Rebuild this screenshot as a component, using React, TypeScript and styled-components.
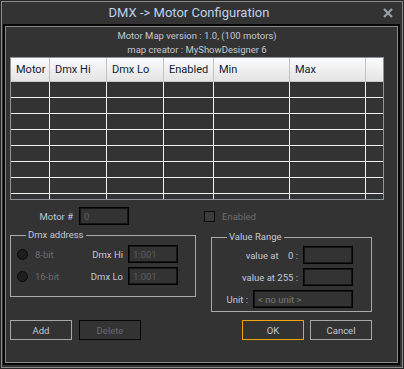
import React from "react";
import styled, { createGlobalStyle } from "styled-components";

const GlobalStyle = createGlobalStyle`
  html, body {
    margin: 0;
    padding: 0;
    background: #333333;
  }
  body {
    font-family: Roboto, "Liberation Sans", Arial, sans-serif;
  }
`;

const Window = styled.div`
  width: 404px;
  height: 369px;
  box-sizing: border-box;
  background: #333333;
  box-shadow: inset 0 0 0 1px #262626, inset 0 0 0 2px #8c8c8c;
  display: flex;
  flex-direction: column;
  padding: 0 4px 4px 3px;
`;

const TitleBar = styled.div`
  height: 24px;
  flex: none;
  display: flex;
  align-items: center;
`;

const Title = styled.div`
  flex: 1;
  text-align: center;
  color: #bdd1ee;
  font-size: 13px;
  padding: 1px 8px 0 0;
`;

const Close = styled.div`
  width: 10px;
  height: 10px;
  margin: 1px 7px 0 0;
  display: flex;
`;

const Panel = styled.div`
  flex: 1;
  border: 2px solid #060606;
  box-shadow: inset 1px 1px 0 #8a8a8a, inset -1px -1px 0 #8a8a8a;
  display: flex;
  flex-direction: column;
  padding: 3px 0 0 5px;
`;

const Info = styled.div`
  text-align: center;
  color: #c3c8d3;
  font-size: 9.5px;
  line-height: 14px;
  padding-right: 14px;
`;

const Table = styled.div`
  width: 374px;
  height: 143px;
  box-sizing: border-box;
  border: 1px solid #8e929c;
  overflow: hidden;
  display: grid;
  grid-template-columns: 39px 57px 57px 50px 76px 76px 1fr;
  grid-auto-rows: 16px;
  grid-template-rows: 24px;
`;

const HeadCell = styled.div<{ $last?: boolean }>`
  box-sizing: border-box;
  background: linear-gradient(#fbfbfb, #e4e4e4);
  border-right: ${(p) => (p.$last ? "none" : "1px solid #c2c2c2")};
  border-bottom: 1px solid #c8c8c8;
  color: #111a36;
  font-size: 11px;
  line-height: 23px;
  padding-left: 5px;
  white-space: nowrap;
`;

const Cell = styled.div<{ $last?: boolean }>`
  box-sizing: border-box;
  border-right: ${(p) => (p.$last ? "none" : "1px solid #f2f2f2")};
  border-bottom: 1px solid #f2f2f2;
`;

const Bottom = styled.div`
  width: 362px;
  margin-top: 7px;
  display: grid;
  grid-template-columns: 186px 168px;
  column-gap: 8px;
  align-items: start;
`;

const Column = styled.div`
  display: flex;
  flex-direction: column;
`;

const FieldRow = styled.div<{ $end?: boolean }>`
  height: 18px;
  display: flex;
  align-items: center;
  justify-content: ${(p) => (p.$end ? "flex-end" : "flex-start")};
  gap: 5px;
`;

const Label = styled.span<{ $width?: number; $dim?: boolean }>`
  font-size: 9.5px;
  color: ${(p) => (p.$dim ? "#6c6c6c" : "#c0c7d5")};
  white-space: pre;
  text-align: right;
  ${(p) => (p.$width ? `width: ${p.$width}px;` : "")}
`;

const Field = styled.input<{ $width?: number }>`
  width: ${(p) => p.$width ?? 50}px;
  height: 18px;
  box-sizing: border-box;
  background: #333333;
  border: 1px solid #000;
  box-shadow: inset 0 0 0 1px #151515;
  outline: none;
  padding: 0 0 0 4px;
  margin: 0;
  font-family: Roboto, "Liberation Sans", Arial, sans-serif;
  font-size: 9.5px;
  color: #5e5e5e;
`;

const Group = styled.fieldset`
  margin: 0;
  min-width: 0;
  border: 1px solid #a8a8a8;
  display: flex;
  flex-direction: column;
  gap: 4px;
`;

const DmxGroup = styled(Group)`
  margin-top: 4px;
  padding: 4px 17px 11px 6px;
`;

const RangeGroup = styled(Group)`
  margin: 6px 0 0 7px;
  padding: 3px 18px 3px 6px;
`;

const Legend = styled.legend`
  margin-left: 9px;
  padding: 0 2px;
  font-size: 9.5px;
  line-height: 12px;
  color: #c0c7d5;
`;

const Radio = styled.span`
  width: 11px;
  height: 11px;
  box-sizing: border-box;
  border-radius: 50%;
  background: #1e1e1e;
  border: 1px solid #0a0a0a;
  margin-right: 2px;
  flex: none;
`;

const Spacer = styled.div`
  flex: 1;
`;

const Check = styled.span`
  width: 11px;
  height: 11px;
  box-sizing: border-box;
  background: #3b3b3b;
  border: 1px solid #0c0c0c;
  margin-right: 2px;
  flex: none;
`;

const ButtonRow = styled.div`
  width: 362px;
  margin-top: 8px;
  display: flex;
  justify-content: space-between;
`;

const ButtonGroup = styled.div<{ $gap: number }>`
  display: flex;
  gap: ${(p) => p.$gap}px;
`;

const Button = styled.div<{ $kind?: "disabled" | "primary" }>`
  width: 62px;
  height: 20px;
  box-sizing: border-box;
  display: flex;
  align-items: center;
  justify-content: center;
  font-size: 9.5px;
  border: 1px solid
    ${(p) =>
      p.$kind === "primary" ? "#f0a40c" : p.$kind === "disabled" ? "#050505" : "#a6a6a6"};
  color: ${(p) => (p.$kind === "disabled" ? "#6a6a6a" : "#c0c7d5")};
`;

const columns = ["Motor", "Dmx Hi", "Dmx Lo", "Enabled", "Min", "Max", ""];

export default function App() {
  return (
    <>
      <GlobalStyle />
      <Window>
        <TitleBar>
          <Title>DMX -&gt; Motor Configuration</Title>
          <Close>
            <svg width="10" height="10" viewBox="0 0 10 10">
              <path d="M1 1L9 9M9 1L1 9" stroke="#9aa0aa" strokeWidth="2.2" />
            </svg>
          </Close>
        </TitleBar>
        <Panel>
          <Info>Motor Map version : 1.0, (100 motors)</Info>
          <Info>map creator : MyShowDesigner 6</Info>
          <Table>
            {columns.map((c, i) => (
              <HeadCell key={c + i} $last={i === columns.length - 1}>
                {c}
              </HeadCell>
            ))}
            {Array.from({ length: 8 }).flatMap((_, r) =>
              columns.map((c, i) => (
                <Cell key={`${r}-${i}`} $last={i === columns.length - 1} />
              ))
            )}
          </Table>
          <Bottom>
            <Column>
              <FieldRow>
                <Label $width={63}>Motor #</Label>
                <Field readOnly defaultValue="0" style={{ marginLeft: 1 }} />
              </FieldRow>
              <DmxGroup>
                <Legend>Dmx address</Legend>
                <FieldRow>
                  <Radio />
                  <Label $dim>8-bit</Label>
                  <Spacer />
                  <Label>Dmx Hi</Label>
                  <Field readOnly defaultValue="1:001" />
                </FieldRow>
                <FieldRow>
                  <Radio />
                  <Label $dim>16-bit</Label>
                  <Spacer />
                  <Label>Dmx Lo</Label>
                  <Field readOnly defaultValue="1:001" />
                </FieldRow>
              </DmxGroup>
            </Column>
            <Column>
              <FieldRow>
                <Check />
                <Label $dim>Enabled</Label>
              </FieldRow>
              <RangeGroup>
                <Legend>Value Range</Legend>
                <FieldRow $end>
                  <Label>{"value at    0 :"}</Label>
                  <Field readOnly defaultValue="" />
                </FieldRow>
                <FieldRow $end>
                  <Label>value at 255 :</Label>
                  <Field readOnly defaultValue="" />
                </FieldRow>
                <FieldRow $end>
                  <Label>Unit :</Label>
                  <Field readOnly defaultValue="< no unit >" $width={100} style={{ color: "#7a7a7a" }} />
                </FieldRow>
              </RangeGroup>
            </Column>
          </Bottom>
          <ButtonRow>
            <ButtonGroup $gap={7}>
              <Button>Add</Button>
              <Button $kind="disabled">Delete</Button>
            </ButtonGroup>
            <ButtonGroup $gap={6}>
              <Button $kind="primary">OK</Button>
              <Button>Cancel</Button>
            </ButtonGroup>
          </ButtonRow>
        </Panel>
      </Window>
    </>
  );
}
